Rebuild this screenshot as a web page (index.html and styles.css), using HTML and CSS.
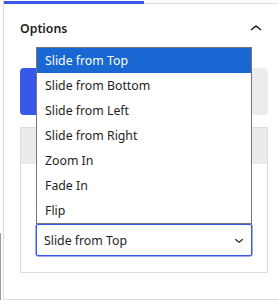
FILE: index.html
```html
<!DOCTYPE html>
<html lang="en">
<head>
  <meta charset="UTF-8">
  <title>Options</title>
  <link rel="stylesheet" href="styles.css">
</head>
<body>
  <div class="edge"><div class="edge-line"></div></div>

  <div class="sidebar">
    <div class="tabs">
      <div class="tab active"></div>
      <div class="tab"></div>
    </div>

    <div class="panel">
      <div class="panel-header">
        <span class="panel-title">Options</span>
        <svg class="icon" viewBox="0 0 24 24" width="24" height="24">
          <path d="M6.5 12.4L12 8l5.5 4.4-.9 1.2L12 10l-4.6 3.6-.9-1.2z"/>
        </svg>
      </div>

      <div class="segmented">
        <div class="segment active"></div>
        <div class="segment"></div>
      </div>

      <div class="box">
        <div class="box-header"></div>
        <div class="box-body">
          <div class="select-wrap">
            <ul class="dropdown">
              <li class="selected">Slide from Top</li>
              <li>Slide from Bottom</li>
              <li>Slide from Left</li>
              <li>Slide from Right</li>
              <li>Zoom In</li>
              <li>Fade In</li>
              <li>Flip</li>
            </ul>
            <div class="select">
              <span>Slide from Top</span>
              <svg class="select-arrow" viewBox="0 0 24 24" width="18" height="18">
                <path d="M17.5 11.6L12 16l-5.5-4.4.9-1.2L12 14l4.6-3.6 1 1.2z"/>
              </svg>
            </div>
          </div>
        </div>
      </div>
    </div>
  </div>
</body>
</html>
```

FILE: styles.css
```css
* {
  margin: 0;
  padding: 0;
  box-sizing: border-box;
}

body {
  display: flex;
  background-color: #fff;
  font-family: 'Noto Sans', 'Open Sans', sans-serif;
  font-size: 12.3px;
  color: #1e1e1e;
  overflow: hidden;
}

.edge {
  width: 3px;
}

.edge-line {
  margin-top: 233px;
  width: 1px;
  height: 67px;
  background-color: #999;
}

.sidebar {
  flex: 1;
  border-left: 1px solid #ddd;
  border-bottom: 1px solid #ddd;
}

/* tab strip */
.tabs {
  display: flex;
  height: 4px;
}

.tab {
  flex: 1;
  border-bottom: 1px solid #ddd;
}

.tab.active {
  flex: 0 0 140px;
  border-bottom: 3px solid #3858e9;
}

.panel {
  padding: 0 11px 24px 16px;
}

.panel-header {
  display: flex;
  justify-content: space-between;
  align-items: center;
  padding: 13px 0 27px;
}

.panel-title {
  font-weight: 600;
  line-height: 24px;
}

.icon {
  fill: #1e1e1e;
}

/* segmented control */
.segmented {
  display: flex;
  height: 47px;
  margin-bottom: 12px;
  background-color: #ececec;
  border-radius: 4px;
}

.segment {
  flex: 1;
}

.segment.active {
  background-color: #3858e9;
  border-radius: 4px;
}

.box {
  border: 1px solid #ddd;
}

.box-header {
  height: 36px;
  background-color: #ebebeb;
}

.box-body {
  padding: 60px 15px 16px;
}

.select-wrap {
  position: relative;
}

.select {
  display: flex;
  justify-content: space-between;
  align-items: center;
  height: 32px;
  padding: 0 3px 0 7px;
  border: 1px solid #3858e9;
  border-radius: 2px;
  box-shadow: 0 0 0 0.5px #3858e9;
}

.select-arrow {
  fill: #1e1e1e;
}

/* open option list */
.dropdown {
  position: absolute;
  left: 0;
  right: 0;
  bottom: 100%;
  list-style: none;
  background-color: #fff;
  border: 1px solid #767676;
}

.dropdown li {
  height: 25px;
  line-height: 25px;
  padding-left: 8px;
}

.dropdown li.selected {
  background-color: #1967d2;
  color: #fff;
}
```
